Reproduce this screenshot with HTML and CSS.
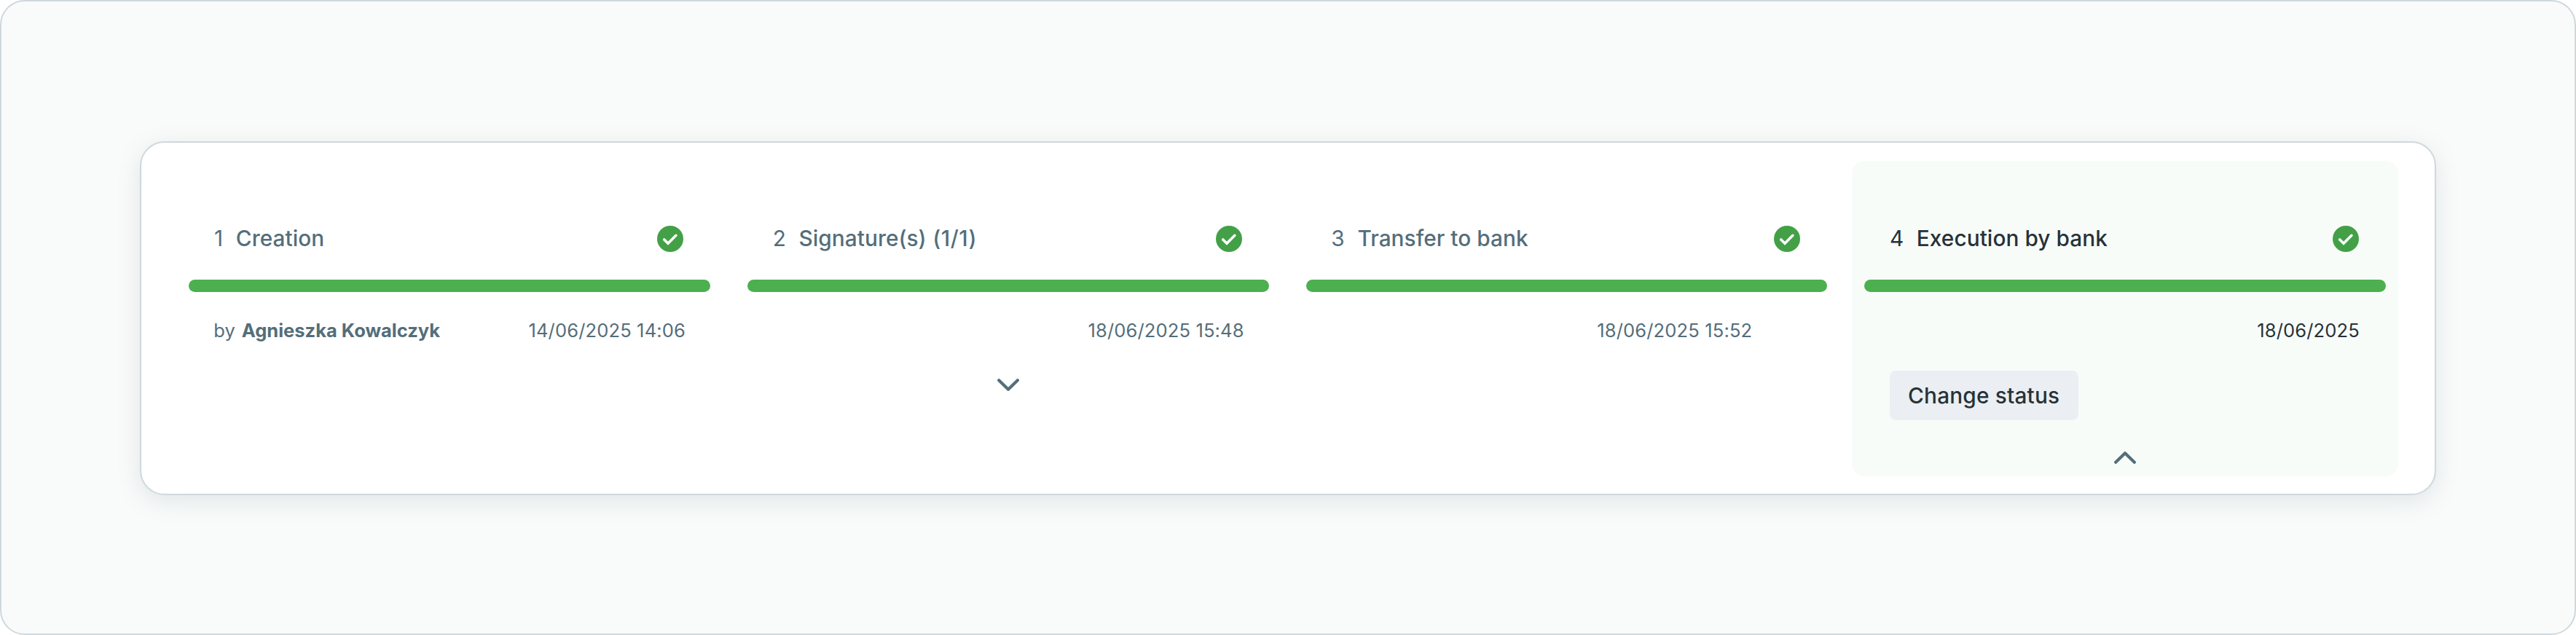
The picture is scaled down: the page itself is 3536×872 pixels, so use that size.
FILE: index.html
```html
<!DOCTYPE html>
<html lang="en">
<head>
<meta charset="utf-8">
<title>Payment progress</title>
<link rel="stylesheet" href="styles.css">
</head>
<body>
<svg class="sprite" width="0" height="0">
  <symbol id="check" viewBox="0 0 36 36">
    <circle cx="18" cy="18" r="18" fill="#43a047"/>
    <path d="M9.7 18.9 15 24.2 25.9 13.3" fill="none" stroke="#fff" stroke-width="3.6" stroke-linecap="round" stroke-linejoin="miter"/>
  </symbol>
  <symbol id="chevron" viewBox="0 0 30 17">
    <path d="M2.2 2.2 15 14.7 27.8 2.2" fill="none" stroke="#546e7a" stroke-width="4.2" stroke-linecap="round" stroke-linejoin="round"/>
  </symbol>
</svg>
<main class="frame">
  <section class="card">
    <article class="step">
      <header class="head"><span class="number">1</span><h2 class="title">Creation</h2><svg class="check"><use href="#check"/></svg></header>
      <div class="bar"></div>
      <div class="info"><span class="by">by</span><strong class="name">Agnieszka Kowalczyk</strong><time class="date">14/06/2025 14:06</time></div>
    </article>
    <article class="step">
      <header class="head"><span class="number">2</span><h2 class="title">Signature(s)<span class="count"> (1/1)</span></h2><svg class="check"><use href="#check"/></svg></header>
      <div class="bar"></div>
      <div class="info"><time class="date">18/06/2025 15:48</time></div>
      <svg class="chevron"><use href="#chevron"/></svg>
    </article>
    <article class="step">
      <header class="head"><span class="number">3</span><h2 class="title">Transfer to bank</h2><svg class="check"><use href="#check"/></svg></header>
      <div class="bar"></div>
      <div class="info info-inset"><time class="date">18/06/2025 15:52</time></div>
    </article>
    <article class="step step-active">
      <header class="head"><span class="number">4</span><h2 class="title">Execution by bank</h2><svg class="check"><use href="#check"/></svg></header>
      <div class="bar"></div>
      <div class="info info-short"><time class="date">18/06/2025</time></div>
      <button class="action" type="button">Change status</button>
      <svg class="chevron chevron-up"><use href="#chevron"/></svg>
    </article>
  </section>
</main>
</body>
</html>
```
FILE: styles.css
```css
* { box-sizing: border-box; }
body {
  margin: 0;
  background: #fff;
  font-family: Inter, "Liberation Sans", sans-serif;
  color: #546e7a;
}
.sprite { display: block; position: absolute; }
.frame {
  height: 872px;
  padding: 191.5px 190px 190px;
  border: 2px solid #cfd8dc;
  border-radius: 34px;
  background: #f9fbfa;
}
.card {
  height: 486.5px;
  display: grid;
  grid-template-columns: repeat(4, 749.67px);
  gap: 17px;
  padding: 25.5px 48.3px 24px;
  border: 2px solid #cfd8dc;
  border-radius: 34px;
  background: #fff;
  box-shadow: 0 8px 32px rgba(84, 110, 122, 0.15);
}
.step {
  display: flex;
  flex-direction: column;
  padding: 85px 17px 0;
  border-radius: 17px;
}
.step-active { background: #f8fcf9; color: #263238; }
.head {
  display: flex;
  align-items: center;
  height: 44px;
  padding: 0 37px 0 34.7px;
  font-size: 29.75px;
  line-height: 42px;
}
.number, .title { align-self: flex-start; }
.title { margin: 0 0 0 17.7px; font-size: inherit; font-weight: 500; letter-spacing: 0.07px; }
.count { letter-spacing: 0.6px; white-space: pre; }
.check { width: 36px; height: 36px; margin-left: auto; }
.bar { height: 17px; margin-top: 34px; border-radius: 8.5px; background: #4caf50; }
.info {
  display: flex;
  align-items: center;
  height: 38px;
  margin-top: 34px;
  padding: 0 34px;
  font-size: 25.5px;
  line-height: 38px;
}
.info-inset { padding-right: 103px; }
.info-short { padding-right: 36px; }
.name { margin-left: 9px; font-weight: 700; }
.date { margin-left: auto; letter-spacing: 0.15px; }
.action {
  align-self: flex-start;
  height: 68px;
  margin: 36px 0 0 34.3px;
  padding: 0 25.5px;
  border: 0;
  border-radius: 8.5px;
  background: #ebeef2;
  color: #263238;
  font: 500 29.75px/68px Inter, "Liberation Sans", sans-serif;
  letter-spacing: 0.2px;
}
.chevron { width: 30px; height: 17px; margin-top: 47px; align-self: center; }
.chevron-up { margin-top: 43px; transform: rotate(180deg); }
```
